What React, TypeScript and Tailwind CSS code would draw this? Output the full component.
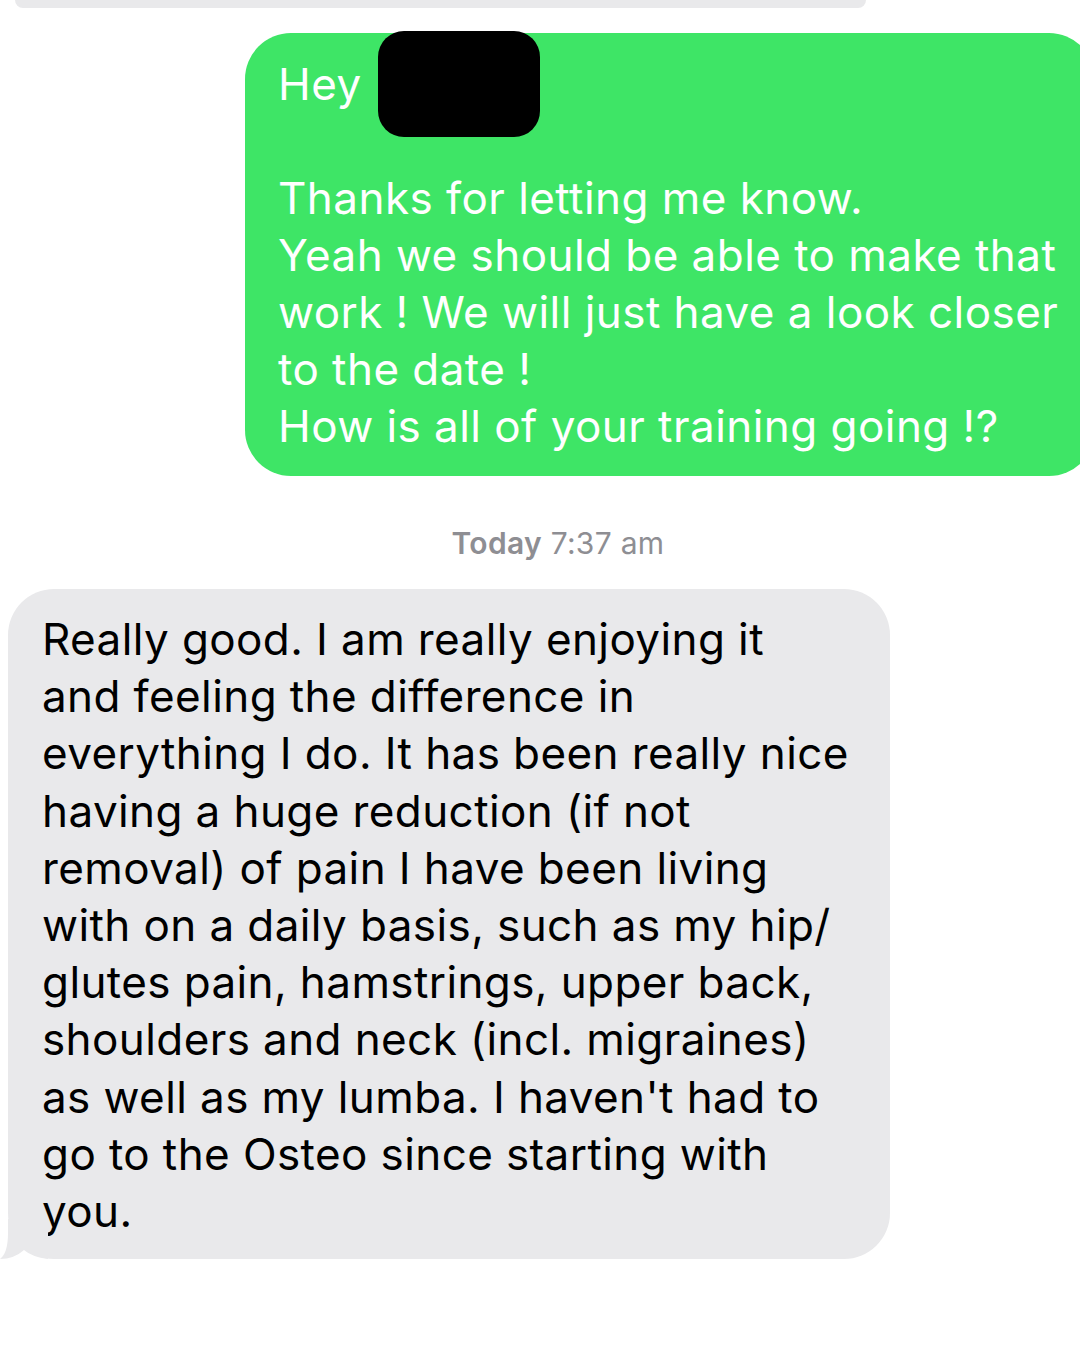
const sentLines = [
  "Thanks for letting me know.",
  "Yeah we should be able to make that",
  "work ! We will just have a look closer",
  "to the date !",
  "How is all of your training going !?",
];

const receivedLines = [
  "Really good. I am really enjoying it",
  "and feeling the difference in",
  "everything I do. It has been really nice",
  "having a huge reduction (if not",
  "removal) of pain I have been living",
  "with on a daily basis, such as my hip/",
  "glutes pain, hamstrings, upper back,",
  "shoulders and neck (incl. migraines)",
  "as well as my lumba. I haven't had to",
  "go to the Osteo since starting with",
  "you.",
];

export default function App() {
  return (
    <div
      className="relative w-[1080px] h-[1350px] overflow-hidden bg-white"
      style={{ fontFamily: "Inter, 'Noto Sans', sans-serif" }}
    >
      {/* tail end of the previous grey bubble */}
      <div className="ml-[15px] w-[851px] h-[8px] rounded-b-[20px] bg-[#e9e9eb]"></div>

      {/* sent bubble */}
      <div className="mt-[25px] ml-[245px] w-[850px] rounded-[46px] bg-[#3ee566] pl-[33px] pt-[23px] pb-[21px] text-[44px] leading-[57px] text-white tracking-[0.45px]">
        <div className="flex items-start h-[57px] whitespace-nowrap">
          <span>Hey</span>
          <span className="ml-[16px] -mt-[25px] w-[162px] h-[106px] shrink-0 rounded-[26px] bg-black"></span>
        </div>
        <div className="h-[57px]"></div>
        {sentLines.map((l) => (
          <div key={l} className="whitespace-nowrap">
            {l}
          </div>
        ))}
      </div>

      {/* timestamp */}
      <div className="mt-[49px] text-center text-[30px] leading-[36px] text-[#8e8e93] tracking-[0.3px] pl-[36px]">
        <span className="font-semibold">Today</span> 7:37 am
      </div>

      {/* received bubble */}
      <div className="relative mt-[28px] ml-[8px] w-[882px]">
        <div className="rounded-[46px] bg-[#e9e9eb] pl-[34px] pt-[22px] pb-[19px] text-[44px] leading-[57.2px] text-black tracking-[0.4px]">
          {receivedLines.map((l) => (
            <div key={l} className="whitespace-nowrap">
              {l}
            </div>
          ))}
        </div>
        <svg
          className="absolute -left-[8px] bottom-0"
          width="50"
          height="40"
          viewBox="0 0 50 40"
        >
          <path
            d="M8 0 L8 14 Q8 34 0 40 Q14 40 24 31 Q32 38 48 40 L48 0 Z"
            fill="#e9e9eb"
          />
        </svg>
      </div>
    </div>
  );
}
